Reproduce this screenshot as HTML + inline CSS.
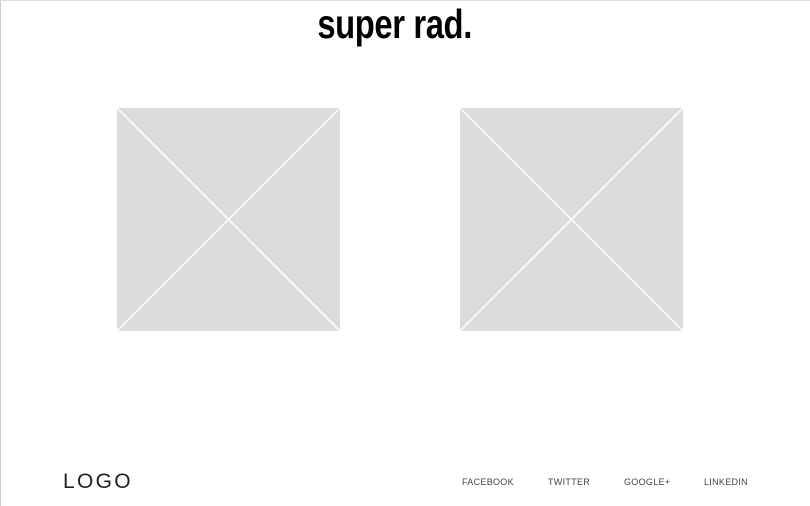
<!DOCTYPE html>
<html><head><style>
html,body{margin:0;padding:0;background:#fff;}
body{width:810px;height:506px;position:relative;overflow:hidden;font-family:"Liberation Sans",sans-serif;}
.frame{position:absolute;left:0;top:0;width:809px;height:505px;border-left:1px solid #ccc;border-top:1px solid #ddd;}
h1{position:absolute;left:0;width:790px;top:1px;margin:0;text-align:center;font-size:41px;font-weight:bold;line-height:46px;color:#000;}
h1 span{display:inline-block;transform:scaleX(0.8);letter-spacing:-0.5px;}
.ph{position:absolute;top:108px;width:223px;height:223px;}
.logo{position:absolute;left:63px;top:469px;font-size:21px;letter-spacing:2.3px;color:#222;line-height:26px;}
.nav{position:absolute;top:476px;font-size:9px;color:#444;letter-spacing:0.3px;line-height:12px;}
</style></head><body>
<div class="frame"></div>
<h1><span>super rad.</span></h1>
<svg class="ph" style="left:117px" viewBox="0 0 223 223"><rect width="223" height="223" fill="#dcdcdc"/><path d="M0 0L223 223M223 0L0 223" stroke="#fff" stroke-width="1.5"/></svg>
<svg class="ph" style="left:460px" viewBox="0 0 223 223"><rect width="223" height="223" fill="#dcdcdc"/><path d="M0 0L223 223M223 0L0 223" stroke="#fff" stroke-width="1.5"/></svg>
<div class="logo">LOGO</div>
<div class="nav" style="left:462px">FACEBOOK</div>
<div class="nav" style="left:548px">TWITTER</div>
<div class="nav" style="left:624px">GOOGLE+</div>
<div class="nav" style="left:704px">LINKEDIN</div>
</body></html>
